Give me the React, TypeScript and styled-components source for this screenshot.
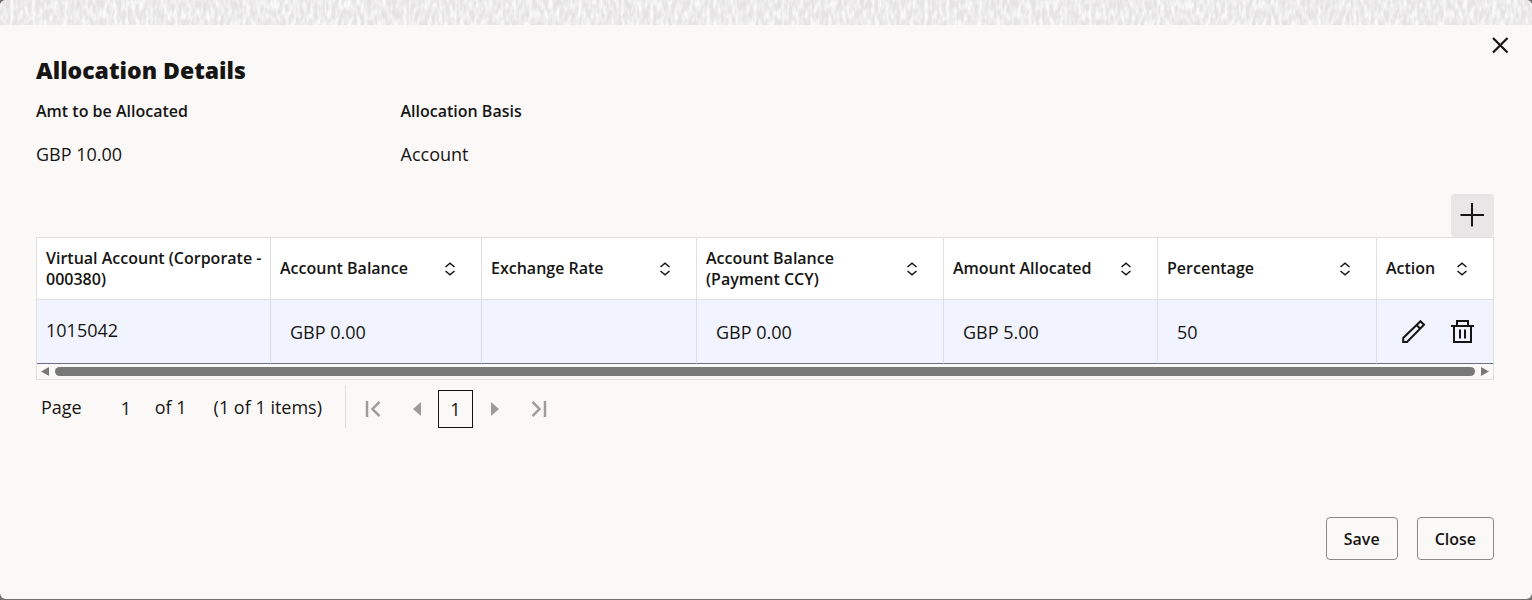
import React from "react";
import styled, { createGlobalStyle } from "styled-components";

const ink = "#161513";
const line = "#e2e0de";
const muted = "#9e9c99";

const GlobalStyle = createGlobalStyle`
  *, *::before, *::after { box-sizing: border-box; }
  body {
    margin: 0;
    background: #73716f;
    color: ${ink};
    font-family: "Open Sans", "Noto Sans", sans-serif;
    font-size: 18px;
    line-height: 24px;
    font-weight: 400;
  }
  button, input { font: inherit; color: inherit; }
`;

const Dialog = styled.main`
  display: flex;
  flex-direction: column;
  min-height: calc(100vh - 1px);
  border-radius: 6px;
  overflow: hidden;
  background: #fbf9f8;
`;

const Strip = styled.svg`
  display: block;
  flex: none;
  width: 100%;
  height: 25px;
  background: #e5e3e3;
`;

const CloseRow = styled.div`
  display: flex;
  justify-content: flex-end;
  padding: 8px 20px 0;
`;

const IconButton = styled.button`
  display: inline-flex;
  align-items: center;
  justify-content: center;
  width: 24px;
  height: 24px;
  padding: 0;
  border: 0;
  background: none;
  cursor: pointer;
`;

const Content = styled.div`
  display: flex;
  flex: 1;
  flex-direction: column;
  padding: 0 38px 39px 36px;
`;

const Title = styled.h1`
  margin: 0;
  font-size: 23px;
  line-height: 26px;
  font-weight: 800;
`;

const Summary = styled.dl`
  display: grid;
  grid-template-columns: repeat(4, 1fr);
  margin: 16px 0 28px;
`;

const SummaryItem = styled.div`
  display: flex;
  flex-direction: column;
  gap: 19px;
`;

const SummaryLabel = styled.dt`
  font-size: 16px;
  font-weight: 600;
`;

const SummaryValue = styled.dd`
  margin: 0;
`;

const Toolbar = styled.div`
  display: flex;
  justify-content: flex-end;
`;

const AddButton = styled(IconButton)`
  width: 43px;
  height: 43px;
  border-radius: 4px;
  background: #e8e6e6;
`;

const TableFrame = styled.section`
  border: 1px solid ${line};
`;

const Table = styled.table`
  width: 100%;
  table-layout: fixed;
  border-collapse: separate;
  border-spacing: 0;
`;

const Col = styled.col<{ $width: number }>`
  width: ${(p) => p.$width}px;
`;

const HeadCell = styled.th`
  height: 62px;
  padding: 0 4px 0 9px;
  border-right: 1px solid ${line};
  border-bottom: 1px solid ${line};
  background: #fff;
  font-size: 16px;
  line-height: 21px;
  font-weight: 600;
  text-align: left;
  &:last-child { border-right: 0; }
`;

const HeadInner = styled.div`
  display: flex;
  align-items: center;
  justify-content: space-between;
`;

const SortButton = styled(IconButton)`
  flex: none;
  margin-right: 15px;
`;

const Cell = styled.td<{ $inset?: boolean }>`
  height: 64px;
  padding: ${(p) => (p.$inset ? "0 18px 0 19px" : "0 9px 4px")};
  border-right: 1px solid #dcdde2;
  border-bottom: 1px solid #6b708c;
  background: #f1f4fe;
  &:last-child { border-right: 0; }
`;

const Actions = styled.div`
  display: flex;
  justify-content: flex-end;
  gap: 25px;
`;

const ScrollTrack = styled.div`
  display: flex;
  align-items: center;
  gap: 6px;
  height: 15px;
  padding: 0 4px;
`;

const ScrollThumb = styled.div`
  flex: 1;
  height: 9px;
  border-radius: 5px;
  background: #787878;
`;

const Pager = styled.nav`
  display: flex;
  align-items: center;
  height: 43px;
  margin-top: 5px;
  padding-left: 5px;
`;

const PageField = styled.label`
  display: flex;
  align-items: center;
  gap: 24px;
`;

const PageInput = styled.input`
  width: 40px;
  height: 28px;
  padding: 2px 0 0 15px;
  border: 0;
  background: none;
`;

const PageCount = styled.span`
  margin-left: 9px;
`;

const ItemCount = styled.span`
  margin-left: 27px;
`;

const PageButtons = styled.div`
  display: flex;
  align-items: center;
  height: 43px;
  margin-left: 23px;
  padding: 4px 0 0 15px;
  border-left: 1px solid ${line};
`;

const CurrentPage = styled.button`
  width: 35px;
  height: 38px;
  margin: 0 10px 0 9px;
  padding: 0;
  border: 1px solid ${ink};
  background: none;
`;

const EdgeButton = styled(IconButton)<{ $side: "start" | "end" }>`
  ${(p) => (p.$side === "start" ? "margin-right: 20px;" : "margin-left: 20px;")}
`;

const Footer = styled.footer`
  display: flex;
  justify-content: flex-end;
  gap: 19px;
  margin-top: auto;
`;

const FooterButton = styled.button`
  height: 43px;
  padding: 0 17px;
  border: 1px solid #8b8987;
  border-radius: 4px;
  background: none;
  font-size: 16px;
  font-weight: 600;
  cursor: pointer;
`;

const SortIcon = () => (
  <svg width="12" height="14" viewBox="0 0 12 14" fill="none" stroke={ink} strokeWidth="1.5">
    <path d="M1.5 5 6 1.2 10.5 5M1.5 9 6 12.8 10.5 9" />
  </svg>
);

const CloseIcon = () => (
  <svg width="18" height="18" viewBox="0 0 18 18" fill="none" stroke={ink} strokeWidth="2.2">
    <path d="M2 2 16.5 16.5M16.5 2 2 16.5" />
  </svg>
);

const PlusIcon = () => (
  <svg width="25" height="25" viewBox="0 0 25 25" fill="none" stroke={ink} strokeWidth="2">
    <path d="M12 0V23.5M0.5 12H24" />
  </svg>
);

const PencilIcon = () => (
  <svg width="24" height="24" viewBox="0 0 24 24" fill="none" stroke={ink} strokeWidth="2">
    <path d="M1.2 22V18L18.5 1.2 22 4.8 5 22ZM14.5 5 18.3 8.8" />
  </svg>
);

const TrashIcon = () => (
  <svg width="24" height="24" viewBox="0 0 24 24" fill="none" stroke={ink} strokeWidth="2">
    <path d="M0 6H23M3 6V22H20V6M6 6V1H17V6" />
    <path d="M9 9.5V18.5M14 9.5V18.5" />
  </svg>
);

const Arrow = ({ dir, color, w, h }: { dir: "left" | "right"; color: string; w: number; h: number }) => (
  <svg width={w} height={h} viewBox="0 0 8 14" preserveAspectRatio="none" fill={color}>
    <path d={dir === "left" ? "M8 0V14L0 7Z" : "M0 0V14L8 7Z"} />
  </svg>
);

const EdgeIcon = ({ dir }: { dir: "first" | "last" }) => (
  <svg width="16" height="18" viewBox="0 0 16 18" fill="none" stroke={muted} strokeWidth="2.5">
    <path d={dir === "first" ? "M2 1V17M14.5 1.8 7.5 9 14.5 16.2" : "M14 1V17M1.5 1.8 8.5 9 1.5 16.2"} />
  </svg>
);

const columns = [
  { label: "Virtual Account (Corporate - 000380)", width: 234, sortable: false },
  { label: "Account Balance", width: 211, sortable: true },
  { label: "Exchange Rate", width: 215, sortable: true },
  { label: "Account Balance (Payment CCY)", width: 247, sortable: true },
  { label: "Amount Allocated", width: 214, sortable: true },
  { label: "Percentage", width: 219, sortable: true },
  { label: "Action", width: 116, sortable: true },
];

const summary = [
  { label: "Amt to be Allocated", value: "GBP 10.00" },
  { label: "Allocation Basis", value: "Account" },
];

export default function App() {
  return (
    <>
      <GlobalStyle />
      <Dialog role="dialog" aria-labelledby="dialog-title">
        <Strip aria-hidden="true">
          <filter id="grain" x="0" y="0" width="100%" height="100%">
            <feTurbulence type="fractalNoise" baseFrequency="0.28 0.1" numOctaves="2" seed="4" />
            <feColorMatrix values="0 0 0 0 0.96  0 0 0 0 0.96  0 0 0 0 0.955  2.5 0 0 0 -0.85" />
          </filter>
          <rect width="100%" height="100%" filter="url(#grain)" />
        </Strip>
        <CloseRow>
          <IconButton aria-label="Dismiss"><CloseIcon /></IconButton>
        </CloseRow>
        <Content>
          <Title id="dialog-title">Allocation Details</Title>
          <Summary>
            {summary.map((item) => (
              <SummaryItem key={item.label}>
                <SummaryLabel>{item.label}</SummaryLabel>
                <SummaryValue>{item.value}</SummaryValue>
              </SummaryItem>
            ))}
          </Summary>
          <Toolbar>
            <AddButton aria-label="Add"><PlusIcon /></AddButton>
          </Toolbar>
          <TableFrame>
            <Table>
              <colgroup>
                {columns.map((c) => <Col key={c.label} $width={c.width} />)}
              </colgroup>
              <thead>
                <tr>
                  {columns.map((c) => (
                    <HeadCell key={c.label} scope="col">
                      <HeadInner>
                        {c.label}
                        {c.sortable && (
                          <SortButton aria-label={`Sort by ${c.label}`}><SortIcon /></SortButton>
                        )}
                      </HeadInner>
                    </HeadCell>
                  ))}
                </tr>
              </thead>
              <tbody>
                <tr>
                  <Cell>1015042</Cell>
                  <Cell $inset>GBP 0.00</Cell>
                  <Cell $inset />
                  <Cell $inset>GBP 0.00</Cell>
                  <Cell $inset>GBP 5.00</Cell>
                  <Cell $inset>50</Cell>
                  <Cell $inset>
                    <Actions>
                      <IconButton aria-label="Edit"><PencilIcon /></IconButton>
                      <IconButton aria-label="Delete"><TrashIcon /></IconButton>
                    </Actions>
                  </Cell>
                </tr>
              </tbody>
            </Table>
            <ScrollTrack aria-hidden="true">
              <Arrow dir="left" color="#787878" w={8} h={9} />
              <ScrollThumb />
              <Arrow dir="right" color="#787878" w={8} h={9} />
            </ScrollTrack>
          </TableFrame>
          <Pager aria-label="Pagination">
            <PageField>
              Page
              <PageInput type="text" defaultValue="1" />
            </PageField>
            <PageCount>of 1</PageCount>
            <ItemCount>(1 of 1 items)</ItemCount>
            <PageButtons>
              <EdgeButton $side="start" aria-label="First page"><EdgeIcon dir="first" /></EdgeButton>
              <IconButton aria-label="Previous page"><Arrow dir="left" color={muted} w={8} h={14} /></IconButton>
              <CurrentPage aria-current="page">1</CurrentPage>
              <IconButton aria-label="Next page"><Arrow dir="right" color={muted} w={8} h={14} /></IconButton>
              <EdgeButton $side="end" aria-label="Last page"><EdgeIcon dir="last" /></EdgeButton>
            </PageButtons>
          </Pager>
          <Footer>
            <FooterButton>Save</FooterButton>
            <FooterButton>Close</FooterButton>
          </Footer>
        </Content>
      </Dialog>
    </>
  );
}
